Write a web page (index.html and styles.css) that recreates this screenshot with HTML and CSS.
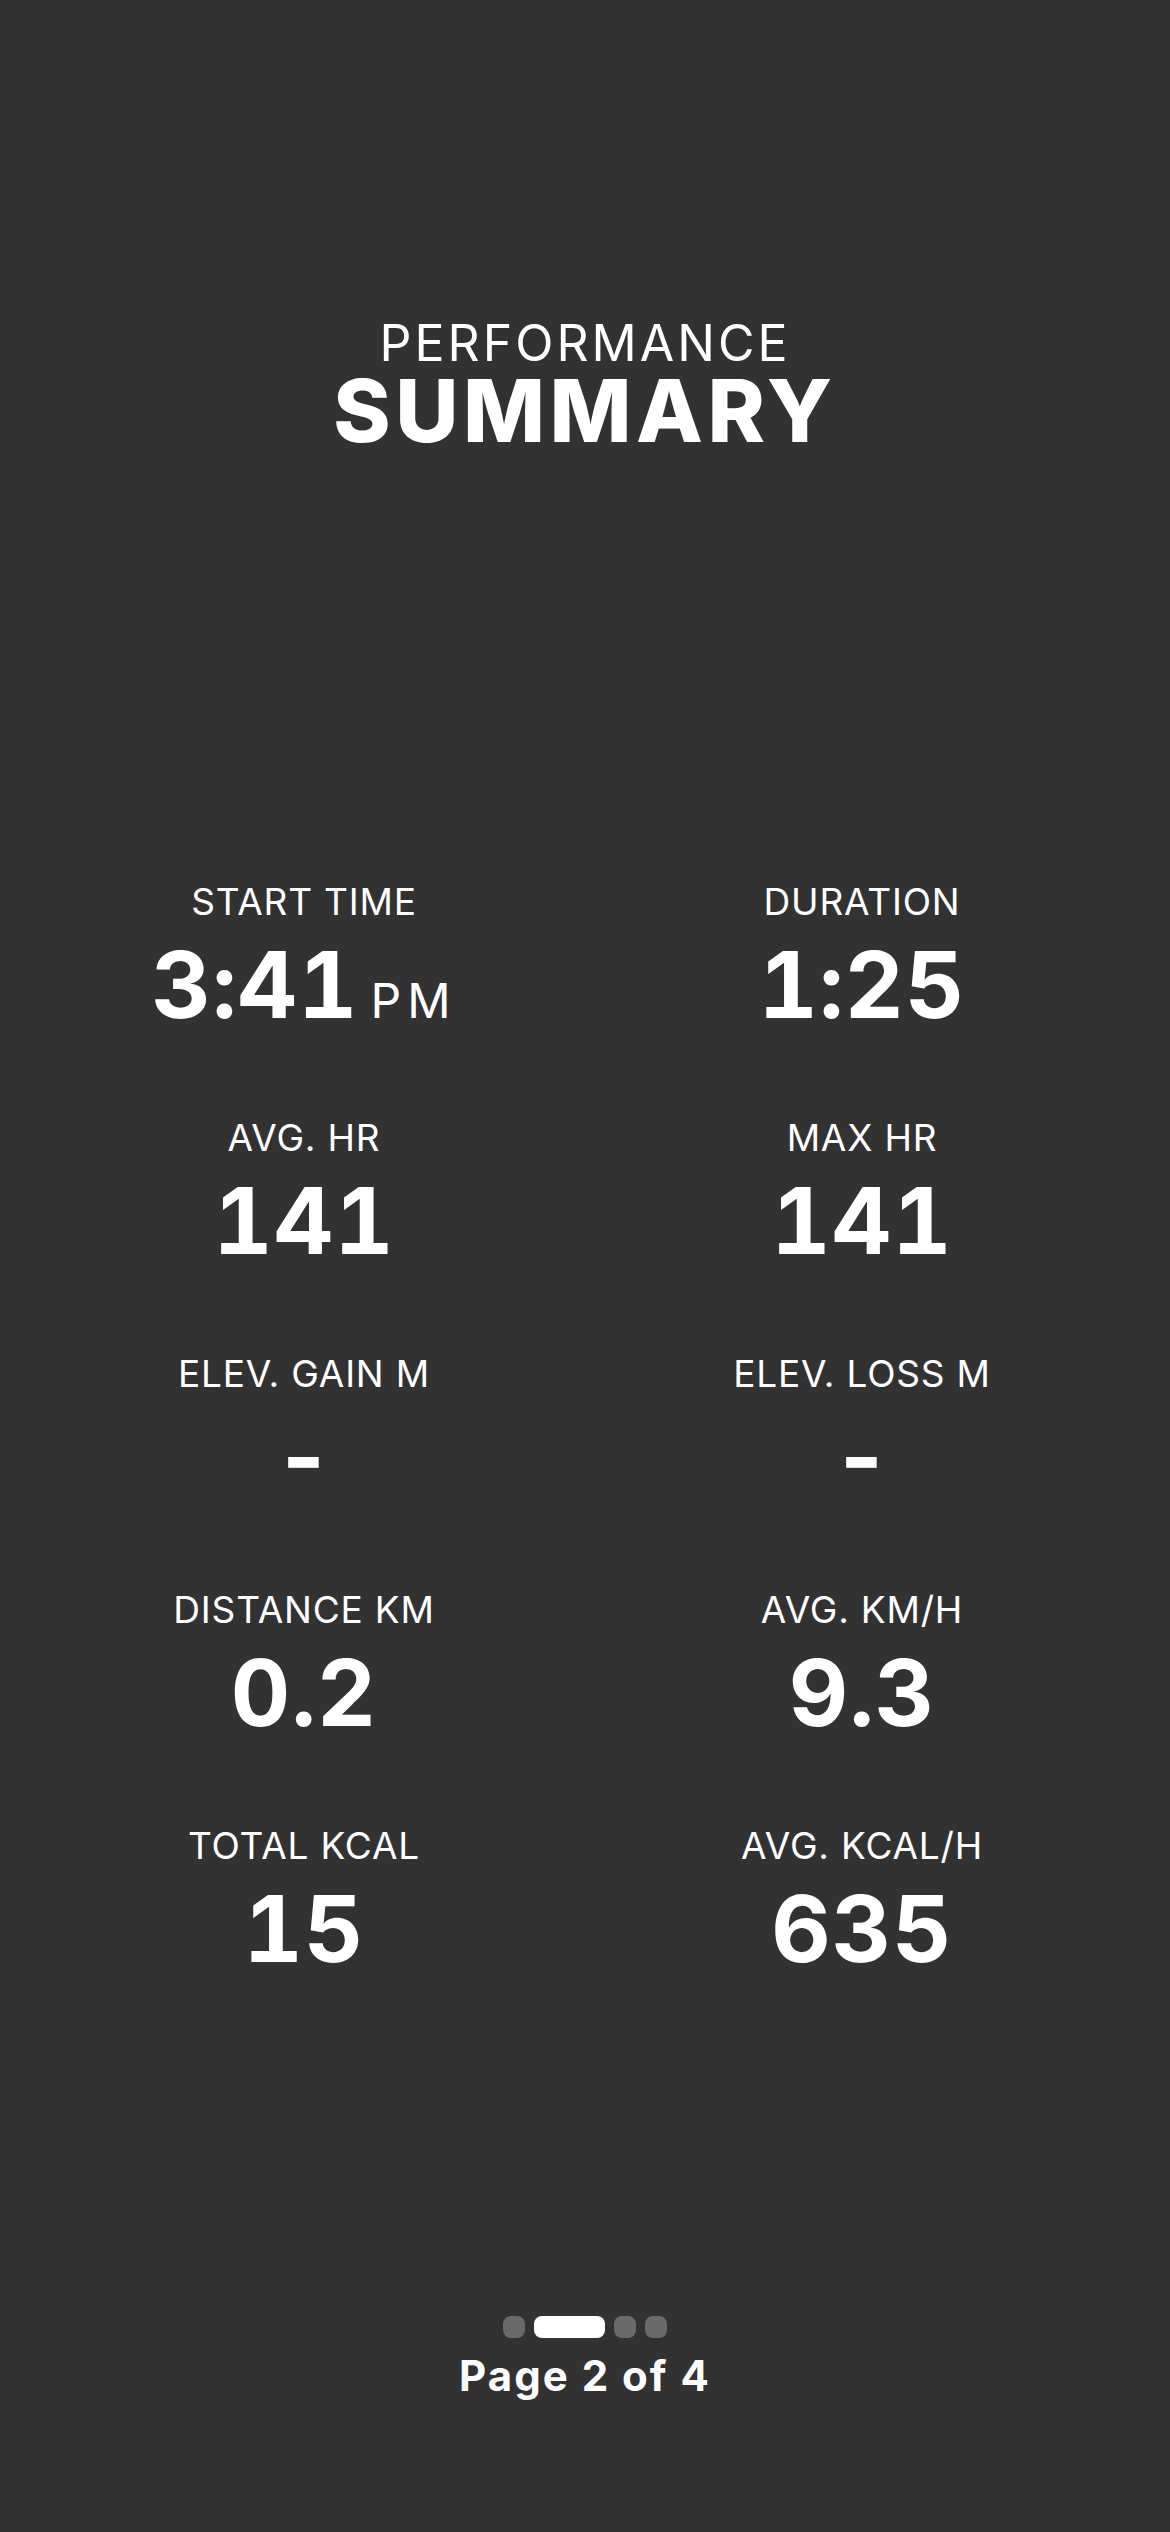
FILE: index.html
```html
<!DOCTYPE html>
<html lang="en">
<head>
    <meta charset="UTF-8">
    <meta name="viewport" content="width=device-width, initial-scale=1.0">
    <title>Performance Summary</title>
    <link rel="stylesheet" href="styles.css">
</head>
<body>
    <div class="screen">
        <header class="title">
            <div class="title-top">PERFORMANCE</div>
            <div class="title-main">SUMMARY</div>
        </header>

        <div class="stats">
            <div class="stat">
                <div class="stat-label">START TIME</div>
                <div class="stat-value">3:41<span class="unit">PM</span></div>
            </div>
            <div class="stat">
                <div class="stat-label">DURATION</div>
                <div class="stat-value">1:25</div>
            </div>
            <div class="stat">
                <div class="stat-label">AVG. HR</div>
                <div class="stat-value">141</div>
            </div>
            <div class="stat">
                <div class="stat-label">MAX HR</div>
                <div class="stat-value">141</div>
            </div>
            <div class="stat">
                <div class="stat-label">ELEV. GAIN M</div>
                <div class="stat-value">-</div>
            </div>
            <div class="stat">
                <div class="stat-label">ELEV. LOSS M</div>
                <div class="stat-value">-</div>
            </div>
            <div class="stat">
                <div class="stat-label">DISTANCE KM</div>
                <div class="stat-value">0.2</div>
            </div>
            <div class="stat">
                <div class="stat-label">AVG. KM/H</div>
                <div class="stat-value">9.3</div>
            </div>
            <div class="stat">
                <div class="stat-label">TOTAL KCAL</div>
                <div class="stat-value">15</div>
            </div>
            <div class="stat">
                <div class="stat-label">AVG. KCAL/H</div>
                <div class="stat-value">635</div>
            </div>
        </div>

        <footer class="pager">
            <div class="dots">
                <span class="dot"></span>
                <span class="dot active"></span>
                <span class="dot"></span>
                <span class="dot"></span>
            </div>
            <div class="page-text">Page 2 of 4</div>
        </footer>
    </div>
</body>
</html>
```

FILE: styles.css
```css
body {
    margin: 0;
    background: #323232;
    color: #fff;
    font-family: Inter, "Noto Sans", sans-serif;
}
.screen {
    min-height: 2532px;
    display: flex;
    flex-direction: column;
    align-items: stretch;
}
.title {
    padding-top: 320px;
    text-align: center;
}
.title-top {
    font-size: 50px;
    line-height: 47px;
    letter-spacing: 3px;
}
.title-main {
    font-size: 87px;
    line-height: 1;
    font-weight: 800;
    letter-spacing: 4.5px;
}
.stats {
    margin-top: 429px;
    padding: 0 29px 0 25px;
    display: grid;
    grid-template-columns: 1fr 1fr;
    row-gap: 88px;
}
.stat {
    display: flex;
    flex-direction: column;
    align-items: center;
}
.stat-label {
    font-size: 37px;
    line-height: 1;
    letter-spacing: 0.8px;
    margin-bottom: 19px;
}
.stat-value {
    font-size: 92px;
    line-height: 1;
    font-weight: 700;
    letter-spacing: 1px;
    font-variant-numeric: tabular-nums;
}
.unit {
    font-size: 48px;
    font-weight: 400;
    letter-spacing: 6px;
    margin-left: 12px;
}
.pager {
    margin-top: auto;
    padding-bottom: 135px;
    display: flex;
    flex-direction: column;
    align-items: center;
}
.dots {
    display: flex;
    gap: 9px;
    margin-bottom: 17px;
}
.dot {
    width: 22px;
    height: 22px;
    border-radius: 8px;
    background: #6a6a6a;
}
.dot.active {
    width: 71px;
    background: #fff;
}
.page-text {
    font-size: 42px;
    line-height: 1;
    font-weight: 700;
    letter-spacing: 2px;
}
```
